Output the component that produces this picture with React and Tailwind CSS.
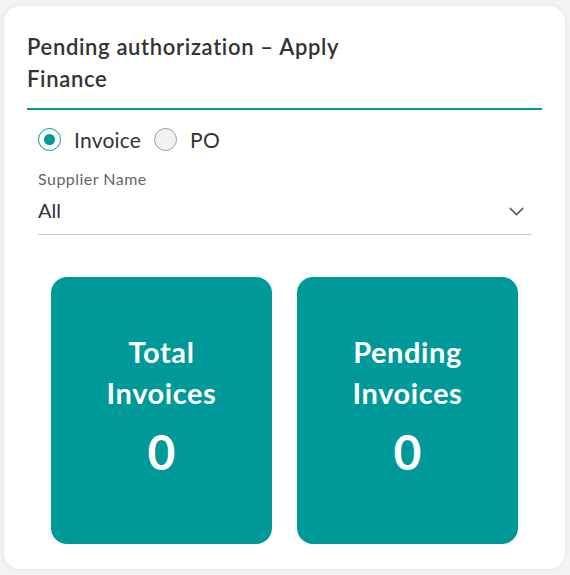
import React, { useState } from 'react';
import { ChevronDown } from 'lucide-react';

const font = { fontFamily: 'Lato, "Noto Sans", sans-serif' };

const Radio = ({ label, checked, onClick }) => (
  <button onClick={onClick} className="flex items-center gap-[13px]">
    <span
      className={
        'flex h-[23px] w-[23px] items-center justify-center rounded-full border ' +
        (checked ? 'border-[#009999] bg-white' : 'border-[#9e9e9e] bg-[#f1f1f3]')
      }
    >
      {checked && <span className="h-[11px] w-[11px] rounded-full bg-[#009999]" />}
    </span>
    <span className="text-[21px] leading-none tracking-[0.01em] text-[#333]">{label}</span>
  </button>
);

const StatCard = ({ title, value }) => (
  <div className="flex h-[267px] flex-col items-center rounded-[16px] bg-[#009999] pt-[54px] text-center font-bold text-white">
    <div className="text-[29px] leading-[41px] tracking-[0.02em]">{title}</div>
    <div className="mt-[14px] text-[48px] leading-[50px]">{value}</div>
  </div>
);

export default function App() {
  const [type, setType] = useState('invoice');

  return (
    <div className="min-h-screen bg-[#f4f4f4] px-[4px] pt-[6px]" style={font}>
      <div className="h-[563px] w-[561px] rounded-[16px] bg-white px-[23px] pt-[25px] shadow-[0_0_6px_rgba(0,0,0,0.08)]">
        <div className="border-b-2 border-[#009999] pb-[13px]">
          <h2 className="max-w-[350px] text-[22px] font-semibold leading-[32px] tracking-[0.03em] text-[#333]">
            Pending authorization – Apply Finance
          </h2>
        </div>

        <div className="px-[11px]">
          <div className="mt-[18px] flex items-center gap-[13px]">
            <Radio label="Invoice" checked={type === 'invoice'} onClick={() => setType('invoice')} />
            <Radio label="PO" checked={type === 'po'} onClick={() => setType('po')} />
          </div>

          <div className="mt-[18px] border-b border-[#c8c8c8] pb-[10px]">
            <div className="text-[16px] leading-[20px] tracking-[0.03em] text-[#666]">Supplier Name</div>
            <div className="mt-[6px] flex items-center justify-between pr-[2px]">
              <span className="text-[20px] leading-[22px] text-[#333]">All</span>
              <ChevronDown size={25} strokeWidth={1.4} className="mt-[4px] text-[#555]" />
            </div>
          </div>

          <div className="mt-[42px] grid grid-cols-2 gap-[25px] px-[13px]">
            <StatCard title={<>Total<br />Invoices</>} value="0" />
            <StatCard title={<>Pending<br />Invoices</>} value="0" />
          </div>
        </div>
      </div>
    </div>
  );
}
